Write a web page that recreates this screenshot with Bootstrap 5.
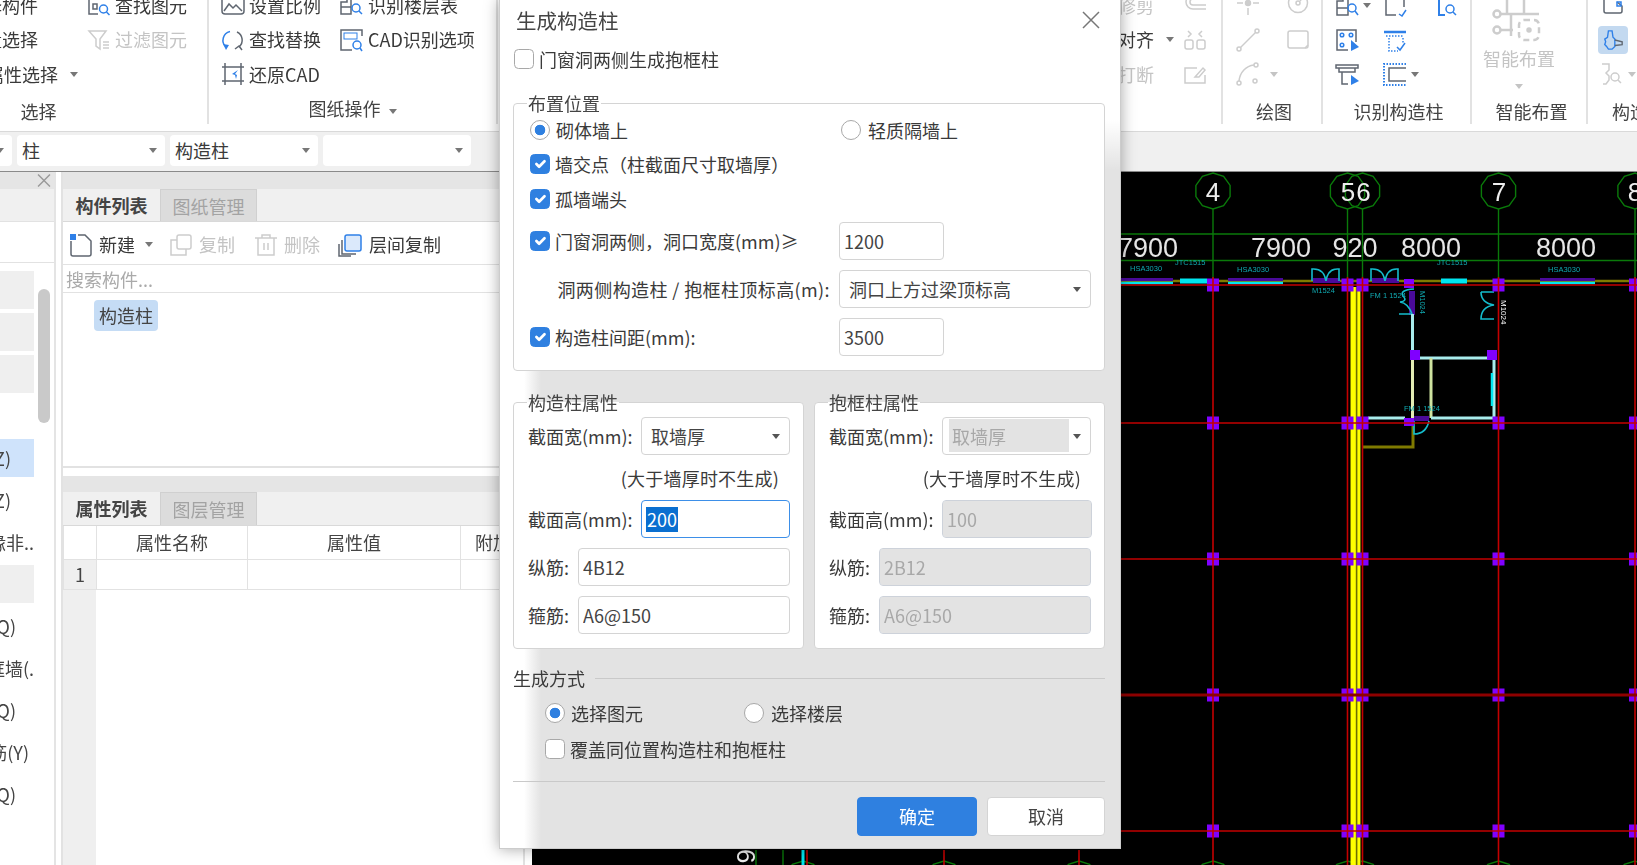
<!DOCTYPE html>
<html lang="zh-CN">
<head>
<meta charset="UTF-8">
<meta name="viewport" content="width=device-width, initial-scale=1.0">
<title>生成构造柱</title>
<link href="https://cdn.jsdelivr.net/npm/bootstrap@5.3.3/dist/css/bootstrap.min.css" rel="stylesheet">
<style>
  html, body { margin: 0; height: 100%; overflow: hidden; background: #fff; }
  body, .form-control, .form-select, .btn { font-family: "Noto Sans CJK SC", "Liberation Sans", sans-serif; font-size: 18px; color: #3a3a3a; }
  .app-root { position: relative; width: 1637px; height: 865px; overflow: hidden; filter: blur(.6px); }

  /* ribbon */
  .ribbon { height: 132px; flex: none; border-bottom: 1px solid #d9d9d9; overflow: hidden; }
  .rb-group { height: 124px; flex: none; display: flex; flex-direction: column; border-right: 2px solid #e2e2e2; }
  .rb-body { margin-top: -12px; height: 103.5px; flex: none; display: flex; }
  .rb-label { margin-top: auto; margin-bottom: 2px; height: 21px; line-height: 21px; text-align: center; white-space: nowrap; color: #444; }
  .rb-col { display: flex; flex-direction: column; flex: none; }
  .rb-item { height: 34.5px; display: flex; align-items: center; gap: 4px; white-space: nowrap; }
  .rb-off { color: #c4c4c4; }
  .ico { width: 24px; height: 24px; fill: none; stroke: #5f6670; stroke-width: 1.5; flex: none; }
  .s-b { stroke: #2f80e8; }
  .s-g { stroke: #cdcdcd; }
  .f-b { fill: #2f80e8; stroke: none; }
  .tri { display: inline-block; width: 0; height: 0; border-left: 4.5px solid transparent; border-right: 4.5px solid transparent; border-top: 5px solid #777; flex: none; }
  .tri-off { border-top-color: #c4c4c4; }
  .ico-hit { width: 30px; height: 28px; background: #c3d9f0; border-radius: 4px; display: flex; align-items: center; justify-content: center; }

  /* combo row */
  .tool-row { height: 39px; flex: none; background: #f0f0f0; gap: 5px; padding-top: 3px; margin-left: -120px; }
  .combo-box { width: 148px; height: 31px; flex: none; background: #fff; border-radius: 4px; display: flex; align-items: center; justify-content: space-between; padding: 0 8px 0 5px; }
  .combo-first { width: 132px; }

  /* panels */
  .work-area { height: 694px; flex: none; border-top: 1px solid #8a8a8a; }
  .side-panel { width: 56px; flex: none; border-right: 2px solid #e4e4e4; overflow: hidden; }
  .pane-head { background: #e5e5e5; flex: none; }
  .side-close { height: 17px; line-height: 15px; text-align: right; padding-right: 0; color: #999; font-size: 20px; }
  .side-tabs { height: 33px; background: #f0f0f0; border-bottom: 1px solid #e2e2e2; }
  .side-blank { height: 41px; border-bottom: 1px solid #e2e2e2; }
  .tree-wrap { padding-top: 8px; }
  .tree-col { width: 34px; flex: none; }
  .tree-row { height: 38px; margin-bottom: 4px; display: flex; align-items: center; justify-content: flex-end; white-space: nowrap; overflow: hidden; color: #444; }
  .tree-grey { background: #efefef; }
  .tree-sel { background: #cfe3fb; }
  .tree-scroll { width: 12px; height: 134px; margin: 18px 0 0 4px; background: #c9c9c9; border-radius: 6px; }

  .mid-panel { width: 464px; margin-left: 5px; flex: none; border-left: 2px solid #e2e2e2; border-right: 2px solid #e2e2e2; }
  .pane-tabs { height: 33px; background: #f0f0f0; flex: none; border-bottom: 1px solid #d9d9d9; }
  .pane-tab { width: 97px; text-align: center; line-height: 32px; font-weight: 700; color: #444; }
  .pane-tab-off { background: #dcdcdc; color: #a3a3a3; font-weight: 400; border: 1px solid #d0d0d0; border-bottom: 0; }
  .pane-bar { height: 42px; flex: none; padding: 3px 0 0 6px; align-items: center; }
  .pane-search { height: 29px; line-height: 29px; flex: none; padding-left: 3px; color: #aaa; border-top: 1px solid #e2e2e2; border-bottom: 1px solid #e2e2e2; }
  .pane-list { height: 175px; flex: none; border-bottom: 2px solid #e2e2e2; }
  .chip-sel { margin: 7px 0 0 31px; width: 64px; height: 31px; line-height: 31px; text-align: center; background: #c5dcf5; border-radius: 4px; color: #444; }
  .pane-gap { height: 8px; flex: none; }
  .prop-table { table-layout: fixed; width: 462px; border-collapse: collapse; flex: none; }
  .prop-table th, .prop-table td { border: 1px solid #e2e2e2; border-top: 0; font-weight: 400; text-align: center; padding: 0; color: #444; overflow: hidden; white-space: nowrap; }
  .prop-table tr:first-child th { height: 33px; }
  .prop-table tbody td { height: 30px; }
  .prop-num { background: #efefef !important; }
  .prop-gutter { width: 33px; flex-grow: 1; background: #efefef; }
  .cad-view { width: 1105px; margin-left: 7px; flex: none; background: #000; }
  .cad-view svg { display: block; }

  /* dialog */
  .dlg-box { position: absolute; left: 499px; top: 0; width: 622px; height: 849px; padding: 0 15px 0 13px; border: 0 solid #ccc; border-width: 0 1px 1px;
    box-shadow: 0 0 14px rgba(0, 0, 0, .35);
    background: linear-gradient(180deg, #fff 120px, rgba(255, 255, 255, 0) 170px), linear-gradient(90deg, #fff 24px, #e3e3e3 41px); }
  .dlg-title { height: 40px; padding-left: 3px; font-size: 20.5px; line-height: 40px; color: #444; }
  .dlg-close { width: 24px; height: 24px; stroke: #777; stroke-width: 1.5; fill: none; margin-right: 2px; }
  .dlg-check { width: 20px; height: 20px; margin: 0 5px 0 0; border: 1px solid #a8a8a8; border-radius: 3px; flex: none; }
  .dlg-check:checked { background-color: #2f80e0; border-color: #2f80e0; }
  .dlg-radio { width: 20px; height: 20px; margin: 0 6px 0 0; border: 1px solid #a8a8a8; flex: none; }
  .dlg-radio:checked { background-color: #fff; border-color: #a8a8a8; background-image: radial-gradient(circle, #2f80e0 0 5px, transparent 5.6px); }
  .dlg-line { height: 20px; margin-top: 9px; padding-left: 1px; display: flex; align-items: center; }
  .dlg-group { position: relative; background: #fff; border: 1px solid #d4d4d4; border-radius: 4px; padding: 14px 13px 14px 14px; }
  .dlg-group-top { padding-left: 16px; }
  .dlg-legend { position: absolute; left: 13px; top: -13px; line-height: 24px; padding: 0 1px; background: linear-gradient(transparent 50%, #fff 50%); color: #444; }
  .opt-row { height: 24px; display: flex; align-items: center; white-space: nowrap; }
  .opt-wide { width: 309px; flex: none; display: flex; align-items: center; }
  .opt-radio { width: 311px; }
  .input-row { display: flex; align-items: center; white-space: nowrap; }
  .form-control.dlg-input, .form-select.dlg-input { height: 38px; min-height: 0; font-size: 18px; padding: 0 4px; border: 1px solid #d4d4d4; border-radius: 4px; box-shadow: none; color: #444; background-color: #fff; }
  .form-select.dlg-input { padding: 0 24px 0 9px;
    background-image: url("data:image/svg+xml,%3Csvg xmlns='http://www.w3.org/2000/svg' width='8' height='5'%3E%3Cpath d='M0 0h8L4 5z' fill='%23555'/%3E%3C/svg%3E");
    background-size: 8px 5px; background-position: right 9px center; background-repeat: no-repeat; }
  .form-control.dlg-input:disabled { background-color: #e3e3e3; border-color: #cdd2da; color: #a8a8a8; }
  .form-select.dlg-input:disabled { color: #a8a8a8; background-color: #fff;
    background-image: url("data:image/svg+xml,%3Csvg xmlns='http://www.w3.org/2000/svg' width='8' height='5'%3E%3Cpath d='M0 0h8L4 5z' fill='%23555'/%3E%3C/svg%3E"), linear-gradient(#e3e3e3, #e3e3e3);
    background-size: 8px 5px, 120px 33px; background-position: right 9px center, 6px 1px; background-repeat: no-repeat; padding-left: 9px; }
  .input-focus { border-color: #3d8fe8 !important; display: flex; align-items: center; }
  .sel-text { background: #0a6fd0; color: #fff; line-height: 25px; padding: 0 1px; }
  .w-side-l { width: 113px; flex: none; }
  .w-side-s { width: 50px; flex: none; }
  .note-line { height: 24px; margin-top: 11px; line-height: 24px; text-align: right; white-space: nowrap; letter-spacing: .2px; }
  .wide-label { letter-spacing: .4px; padding-right: 9px; }
  .btn.dlg-ok { width: 120px; height: 39px; background: #2f80e0; border: 1px solid #2f80e0; color: #fff; padding: 0; border-radius: 4px; }
  .btn.dlg-cancel { width: 118px; height: 39px; background: #fff; border: 1px solid #d4d4d4; color: #444; padding: 0; border-radius: 4px; }
  .dlg-rule { flex-grow: 1; height: 1px; background: #c9c9c9; }
</style>
</head>
<body>
<div class="app-root d-flex flex-column">

  <!-- ribbon -->
  <div class="ribbon d-flex">
    <div class="rb-group" style="width:209px">
      <div class="rb-body">
        <div class="rb-col" style="width:121px;margin-left:-34px">
          <div class="rb-item">选择构件</div>
          <div class="rb-item">批量选择</div>
          <div class="rb-item"><span style="margin-left:2px">按属性选择</span><span class="tri ms-2"></span></div>
        </div>
        <div class="rb-col">
          <div class="rb-item">
            <svg class="ico" viewBox="0 0 24 24"><path d="M20 3H2v18h9"/><path d="M6 11h4v5H6z"/><circle class="s-b" cx="16.500" cy="16" r="4"/><path class="s-b" d="M19.500 19l3 3"/></svg>查找图元</div>
          <div class="rb-item rb-off">
            <svg class="ico s-g" viewBox="0 0 24 24"><path d="M2 3h17l-6 8v10l-4-3v-7z"/><path d="M16 14h6M16 17h6M16 20h6"/></svg>过滤图元</div>
        </div>
      </div>
      <div class="rb-label" style="margin-right:130px">选择</div>
    </div>

    <div class="rb-group" style="width:289px">
      <div class="rb-body" style="padding-left:12px">
        <div class="rb-col" style="width:118px">
          <div class="rb-item">
            <svg class="ico" viewBox="0 0 24 24"><rect x="1" y="2" width="22" height="19" rx="3"/><path d="M3 18l5-7 4 4 3-3 6 6"/></svg>设置比例</div>
          <div class="rb-item">
            <svg class="ico" viewBox="0 0 24 24"><path class="s-b" d="M9 3.500A9 9 0 0 0 5 19"/><path class="f-b" d="M2 16l6 1-3 5z"/><path d="M16 4A9 9 0 0 1 18 19"/><path d="M14 21l4-3 3 4"/></svg>查找替换</div>
          <div class="rb-item">
            <svg class="ico" viewBox="0 0 24 24"><path d="M4 1v22M1 19h22M1 5h22M20 1v22"/><path class="f-b" d="M17 8l-6 4 3 1 1 4 1-4-2-1z"/></svg>还原CAD</div>
        </div>
        <div class="rb-col">
          <div class="rb-item" style="gap:5px">
            <svg class="ico" viewBox="0 0 24 24"><path d="M2 21V9h6V3h4v18H2zM2 14h10"/><circle class="s-b" cx="17" cy="15" r="4"/><path class="s-b" d="M20 18l3 3"/></svg>识别楼层表</div>
          <div class="rb-item" style="gap:5px">
            <svg class="ico" viewBox="0 0 24 24"><path d="M23 8V2H2v20h11"/><rect class="s-b" x="5" y="5" width="13" height="6" stroke-width="1"/><circle class="s-b" cx="18" cy="17" r="4"/><path class="s-b" d="M21 20l2 3"/></svg>CAD识别选项</div>
        </div>
      </div>
      <div class="rb-label" style="margin:auto 0 5px 0">图纸操作<span class="tri ms-2 align-middle"></span></div>
    </div>

    <div class="rb-group" style="width:725px">
      <div class="rb-body" style="padding-left:620px">
        <div class="rb-col" style="width:65px">
          <div class="rb-item rb-off">修剪</div>
          <div class="rb-item">对齐<span class="tri ms-2"></span></div>
          <div class="rb-item rb-off">打断</div>
        </div>
        <div class="rb-col">
          <div class="rb-item"><svg class="ico s-g" viewBox="0 0 24 24"><path d="M23 2H10a7 7 0 0 0 0 14h13M23 6H10a3 3 0 0 0 0 6h13"/></svg></div>
          <div class="rb-item"><svg class="ico s-g" viewBox="0 0 24 24"><rect x="2" y="12" width="8" height="9" rx="2"/><rect x="14" y="12" width="8" height="9" rx="2"/><path d="M5 3l3 3-3 3M19 3l-3 3 3 3"/></svg></div>
          <div class="rb-item"><svg class="ico s-g" viewBox="0 0 24 24"><path d="M22 13v8H2V6h12"/><path d="M12 15l8-9 2 2-6 7z"/></svg></div>
        </div>
      </div>
    </div>

    <div class="rb-group" style="width:100px">
      <div class="rb-body" style="padding-left:13px">
        <div class="rb-col" style="width:50px">
          <div class="rb-item"><svg class="ico s-g" viewBox="0 0 24 24"><circle cx="12" cy="10" r="2.500" fill="#cdcdcd"/><path d="M1 10h6M17 10h6M12 15v7"/></svg></div>
          <div class="rb-item"><svg class="ico s-g" viewBox="0 0 24 24"><circle cx="3" cy="21" r="2"/><circle cx="21" cy="3" r="2"/><path d="M4.500 19.500l15-15"/></svg></div>
          <div class="rb-item"><svg class="ico s-g" viewBox="0 0 24 24"><circle cx="3" cy="21" r="2"/><circle cx="20" cy="3" r="2"/><circle cx="19" cy="19" r="2"/><path d="M3 19C4 10 10 4 18 3"/></svg><span class="tri tri-off" style="margin-left:6px"></span></div>
        </div>
        <div class="rb-col">
          <div class="rb-item"><svg class="ico s-g" viewBox="0 0 24 24"><circle cx="12" cy="10" r="9.500"/><circle cx="12" cy="10" r="2"/><path d="M14 8l4-5"/></svg></div>
          <div class="rb-item"><svg class="ico s-g" viewBox="0 0 24 24"><rect x="2" y="3" width="20" height="17" rx="2"/><path d="M22 17l-3 3" /></svg></div>
        </div>
      </div>
      <div class="rb-label" style="margin-left:4px">绘图</div>
    </div>

    <div class="rb-group" style="width:149px">
      <div class="rb-body" style="padding-left:12px">
        <div class="rb-col" style="width:48px">
          <div class="rb-item gap-1"><svg class="ico" viewBox="0 0 24 24"><path d="M2 22V8h6V2h5v20H2zM2 15h11"/><circle class="s-b" cx="17" cy="15" r="4"/><path class="s-b" d="M20 18l3 4"/></svg><span class="tri"></span></div>
          <div class="rb-item"><svg class="ico" viewBox="0 0 24 24"><path d="M13 22H2V2h19v12"/><circle class="s-b" cx="7" cy="7" r="1.800"/><circle class="s-b" cx="16" cy="7" r="1.800"/><circle class="s-b" cx="7" cy="17" r="1.800"/><path class="f-b" d="M16 12l8 7-8 4z"/></svg></div>
          <div class="rb-item"><svg class="ico" viewBox="0 0 24 24"><path d="M1 3h22v3H1zM4 6v4h16V6M7 10v12h6"/><path class="f-b" d="M16 13l8 6-8 4z"/></svg></div>
        </div>
        <div class="rb-col" style="width:51px">
          <div class="rb-item"><svg class="ico" viewBox="0 0 24 24"><path d="M3 2v20h10M21 2v12"/><path class="s-b" d="M16 21l3 2 4-6"/></svg></div>
          <div class="rb-item"><svg class="ico" viewBox="0 0 24 24"><path class="s-b" stroke-width="2.500" d="M1 4h22"/><path class="s-b" stroke-dasharray="1.500 1.500" d="M3 8h18M6 10v13h9M20 10v5"/><path class="s-b" d="M14 19l3 3 5-7"/></svg></div>
          <div class="rb-item gap-1"><svg class="ico" viewBox="0 0 24 24"><path class="s-b" stroke-width="2" stroke-dasharray="1.500 1.500" d="M23 2H1v21h22"/><path d="M23 6H6v13h17"/></svg><span class="tri"></span></div>
        </div>
        <div class="rb-col">
          <div class="rb-item"><svg class="ico" viewBox="0 0 24 24"><path class="s-b" stroke-width="2" d="M1 4h20M5 7v15h6"/><path class="f-b" d="M2 1h18v6H2z"/><circle class="s-b" cx="16" cy="16" r="4"/><path class="s-b" d="M19 19l3 3"/></svg></div>
        </div>
      </div>
      <div class="rb-label" style="margin-left:4px">识别构造柱</div>
    </div>

    <div class="rb-group" style="width:116px">
      <div class="rb-body flex-column" style="padding-left:10px">
        <svg style="width:58px;height:54px;flex:none;margin-left:7px;fill:none;stroke:#cdcdcd;stroke-width:2.500" viewBox="0 0 58 54">
          <path d="M11 26h39M11 42h13M18 0v26M35 0v26M22 26v22"/>
          <circle cx="8" cy="26" r="3.500"/><circle cx="8" cy="42" r="3.500"/>
          <rect x="30" y="32" width="20" height="20" rx="5" stroke-dasharray="6 4"/>
          <circle cx="40" cy="42" r="1.500" fill="#cdcdcd"/>
        </svg>
        <div class="rb-off text-center" style="width:74px;line-height:24px;margin-top:4px">智能布置</div>
        <div class="text-center" style="width:74px;line-height:14px;margin-top:4px"><span class="tri tri-off"></span></div>
      </div>
      <div class="rb-label" style="margin-left:5px">智能布置</div>
    </div>

    <div class="rb-group border-0" style="width:49px">
      <div class="rb-body" style="padding-left:12px">
        <div class="rb-col">
          <div class="rb-item"><svg class="ico" viewBox="0 0 24 24"><path d="M4 0v18a2 2 0 0 0 2 2h14a2 2 0 0 0 2-2v-5l-5-4"/><path class="s-b" d="M17 9h4v4h-4z"/></svg></div>
          <div class="rb-item" style="margin-left:-2px"><div class="ico-hit"><svg class="ico" style="width:22px" viewBox="0 0 24 24"><path class="s-b" d="M7 2h4l1 7 2 2v8l-3 3H7l-2-3-2-2 1-3-1-3 3-2z"/><path d="M14 12l8 2v3l-8 1"/></svg></div></div>
          <div class="rb-item gap-1"><svg class="ico s-g" viewBox="0 0 24 24"><path d="M2 2h7v6l-3 3 3 3v4l-3 4h-3"/><circle cx="15" cy="15" r="4"/><path d="M18 18l3 3"/></svg><span class="tri tri-off"></span></div>
        </div>
      </div>
      <div class="rb-label text-start" style="margin-left:24px">构造柱</div>
    </div>
  </div>

  <!-- combos -->
  <div class="tool-row d-flex">
    <div class="combo-box combo-first"><span>楼层</span><span class="tri"></span></div>
    <div class="combo-box"><span>柱</span><span class="tri"></span></div>
    <div class="combo-box"><span>构造柱</span><span class="tri"></span></div>
    <div class="combo-box"><span></span><span class="tri"></span></div>
  </div>

  <!-- panels and drawing -->
  <div class="work-area d-flex">
    <div class="side-panel d-flex flex-column">
      <div class="pane-head side-close">×</div>
      <div class="side-tabs"></div>
      <div class="side-blank"></div>
      <div class="tree-wrap d-flex">
        <div class="tree-col">
          <div class="tree-row tree-grey"></div>
          <div class="tree-row tree-grey"></div>
          <div class="tree-row tree-grey"></div>
          <div class="tree-row"></div>
          <div class="tree-row tree-sel" style="padding-right:23px">(GZ)</div>
          <div class="tree-row" style="padding-right:23px">(GZ)</div>
          <div class="tree-row">缘非..</div>
          <div class="tree-row tree-grey"></div>
          <div class="tree-row" style="padding-right:18px">(Q)</div>
          <div class="tree-row">框墙(.</div>
          <div class="tree-row" style="padding-right:18px">(Q)</div>
          <div class="tree-row" style="padding-right:5px">筋(Y)</div>
          <div class="tree-row" style="padding-right:18px">(Q)</div>
        </div>
        <div class="tree-scroll"></div>
      </div>
    </div>

    <div class="mid-panel d-flex flex-column">
      <div class="pane-head" style="height:17px"></div>
      <div class="pane-tabs d-flex">
        <div class="pane-tab">构件列表</div>
        <div class="pane-tab pane-tab-off">图纸管理</div>
      </div>
      <div class="pane-bar d-flex">
        <svg class="ico" viewBox="0 0 24 24"><path d="M2 8v13a2 2 0 0 0 2 2h16a2 2 0 0 0 2-2V8l-6-6H9"/><path class="f-b" d="M1 1h6v6H1z"/></svg>
        <span style="margin-left:6px">新建</span><span class="tri" style="margin-left:10px"></span>
        <svg class="ico s-g" style="margin-left:16px" viewBox="0 0 24 24"><rect x="8" y="2" width="14" height="14" rx="2"/><path d="M8 7H2v15h15v-6"/></svg>
        <span class="rb-off" style="margin-left:6px">复制</span>
        <svg class="ico s-g" style="margin-left:19px" viewBox="0 0 24 24"><path d="M1 5h22M8 5V2h8v3M4 5v17h16V5M10 10v7M14 10v7"/></svg>
        <span class="rb-off" style="margin-left:6px">删除</span>
        <svg class="ico" style="margin-left:18px" viewBox="0 0 24 24"><rect class="s-b" x="7" y="2" width="16" height="16" rx="2" fill="#dbe9fb"/><path d="M4 7v14h14M1 11v12h12"/></svg>
        <span style="margin-left:7px">层间复制</span>
      </div>
      <div class="pane-search">搜索构件...</div>
      <div class="pane-list"><div class="chip-sel">构造柱</div></div>
      <div class="pane-gap"></div>
      <div class="pane-head" style="height:16px"></div>
      <div class="pane-tabs d-flex" style="height:34px">
        <div class="pane-tab">属性列表</div>
        <div class="pane-tab pane-tab-off">图层管理</div>
      </div>
      <table class="prop-table">
        <colgroup><col style="width:33px"><col style="width:151px"><col style="width:213px"><col style="width:65px"></colgroup>
        <thead><tr><th></th><th>属性名称</th><th>属性值</th><th>附加</th></tr></thead>
        <tbody><tr><td class="prop-num">1</td><td></td><td></td><td></td></tr></tbody>
      </table>
      <div class="prop-gutter"></div>
    </div>

    <div class="cad-view">
      <svg id="cadPlan" width="1105" height="694" viewBox="532 171 1105 694" font-family="Liberation Sans, sans-serif"></svg>
    </div>
  </div>

  <!-- dialog -->
  <div class="dlg-box">
    <div class="dlg-title d-flex justify-content-between align-items-center">
      <span>生成构造柱</span>
      <svg class="dlg-close" viewBox="0 0 24 24"><path d="M4 4l16 16M20 4L4 20"/></svg>
    </div>
    <div class="dlg-line">
      <input class="form-check-input dlg-check" type="checkbox"><span>门窗洞两侧生成抱框柱</span>
    </div>

    <div class="dlg-group dlg-group-top" style="margin-top:34px;height:268px">
      <div class="dlg-legend">布置位置</div>
      <div class="opt-row">
        <div class="opt-wide opt-radio"><input class="form-check-input dlg-radio" type="radio" name="pos" checked><span>砌体墙上</span></div>
        <input class="form-check-input dlg-radio" type="radio" name="pos" style="margin-right:7px"><span>轻质隔墙上</span>
      </div>
      <div class="opt-row" style="margin-top:10px"><input class="form-check-input dlg-check" type="checkbox" checked><span>墙交点（柱截面尺寸取墙厚）</span></div>
      <div class="opt-row" style="margin-top:11px"><input class="form-check-input dlg-check" type="checkbox" checked><span>孤墙端头</span></div>
      <div class="input-row" style="margin-top:11px">
        <div class="opt-wide"><input class="form-check-input dlg-check" type="checkbox" checked><span>门窗洞两侧，洞口宽度(mm)≥</span></div>
        <input class="form-control dlg-input" style="width:105px" value="1200">
      </div>
      <div class="input-row" style="margin-top:10px">
        <div class="opt-wide justify-content-end wide-label">洞两侧构造柱 / 抱框柱顶标高(m):</div>
        <select class="form-select dlg-input" style="width:253px"><option>洞口上方过梁顶标高</option></select>
      </div>
      <div class="input-row" style="margin-top:10px">
        <div class="opt-wide"><input class="form-check-input dlg-check" type="checkbox" checked><span>构造柱间距(mm):</span></div>
        <input class="form-control dlg-input" style="width:105px" value="3500">
      </div>
    </div>

    <div class="d-flex" style="margin-top:31px;gap:10px">
      <div class="dlg-group" style="width:291px;height:247px">
        <div class="dlg-legend">构造柱属性</div>
        <div class="input-row"><div class="w-side-l">截面宽(mm):</div>
          <select class="form-select dlg-input" style="width:149px"><option>取墙厚</option></select></div>
        <div class="note-line" style="padding-right:11px">(大于墙厚时不生成)</div>
        <div class="input-row" style="margin-top:10px"><div class="w-side-l">截面高(mm):</div>
          <div class="form-control dlg-input input-focus" style="width:149px"><span class="sel-text">200</span></div></div>
        <div class="input-row" style="margin-top:10px"><div class="w-side-s">纵筋:</div>
          <input class="form-control dlg-input" style="width:212px" value="4B12"></div>
        <div class="input-row" style="margin-top:10px"><div class="w-side-s">箍筋:</div>
          <input class="form-control dlg-input" style="width:212px" value="A6@150"></div>
      </div>
      <div class="dlg-group" style="width:291px;height:247px">
        <div class="dlg-legend">抱框柱属性</div>
        <div class="input-row"><div class="w-side-l">截面宽(mm):</div>
          <select class="form-select dlg-input" style="width:150px" disabled><option>取墙厚</option></select></div>
        <div class="note-line" style="padding-right:10px">(大于墙厚时不生成)</div>
        <div class="input-row" style="margin-top:10px"><div class="w-side-l">截面高(mm):</div>
          <input class="form-control dlg-input" style="width:150px" value="100" disabled></div>
        <div class="input-row" style="margin-top:10px"><div class="w-side-s">纵筋:</div>
          <input class="form-control dlg-input" style="width:213px" value="2B12" disabled></div>
        <div class="input-row" style="margin-top:10px"><div class="w-side-s">箍筋:</div>
          <input class="form-control dlg-input" style="width:213px" value="A6@150" disabled></div>
      </div>
    </div>

    <div class="d-flex align-items-center" style="margin-top:18px;height:22px;gap:10px"><span>生成方式</span><div class="dlg-rule"></div></div>
    <div class="opt-row" style="margin-top:12px;padding-left:32px">
      <div class="d-flex align-items-center" style="width:199px"><input class="form-check-input dlg-radio" type="radio" name="mode" checked><span>选择图元</span></div>
      <input class="form-check-input dlg-radio" type="radio" name="mode" style="margin-right:7px"><span>选择楼层</span>
    </div>
    <div class="opt-row" style="margin-top:12px;padding-left:32px"><input class="form-check-input dlg-check" type="checkbox"><span>覆盖同位置构造柱和抱框柱</span></div>
    <div class="dlg-rule" style="margin-top:20px"></div>
    <div class="d-flex justify-content-end" style="margin-top:15px;gap:10px">
      <button type="button" class="btn dlg-ok">确定</button>
      <button type="button" class="btn dlg-cancel">取消</button>
    </div>
  </div>
</div>

<script src="https://cdn.jsdelivr.net/npm/bootstrap@5.3.3/dist/js/bootstrap.bundle.min.js"></script>
<script>
// axis grid of the plan, page coordinates are used directly in the viewBox
const plan = document.getElementById('cadPlan');
function add(tag, attrs, txt) {
  const el = document.createElementNS('http://www.w3.org/2000/svg', tag);
  for (const k in attrs) el.setAttribute(k, attrs[k]);
  if (txt) el.textContent = txt;
  plan.appendChild(el);
  return el;
}
function line(x1, y1, x2, y2, stroke, w) {
  add('line', { x1, y1, x2, y2, stroke, 'stroke-width': w });
}
function bubble(cx, cy) {
  const pts = [];
  for (let i = 0; i < 10; i++) {
    const a = -Math.PI / 2 + i * Math.PI / 5;
    pts.push((cx + 18 * Math.cos(a)).toFixed(1) + ',' + (cy + 18 * Math.sin(a)).toFixed(1));
  }
  add('polygon', { points: pts.join(' '), fill: 'none', stroke: '#0a7a0a', 'stroke-width': 1.4 });
}
const GREEN = '#0a7a0a', RED = '#c40000', CYAN = '#00e5f0', TEAL = '#14bccc', OLIVE = '#7f7a00', PURP = '#8000ff', DARKP = '#4a0a9a';
const cols = [1213, 1347.5, 1362.5, 1498.5, 1635];
const rows = [284, 422, 558, 694, 830];

// green axis lines
line(532, 233, 1637, 233, GREEN, 1.4);
line(532, 259.500, 1637, 259.500, GREEN, 1.4);
cols.forEach(x => { bubble(x, 190); line(x, 208, x, 284, GREEN, 1.4); bubble(x, 878); });
[803, 944, 1079].forEach(x => bubble(x, 878));
line(756, 849, 756, 865, GREEN, 1.4);
line(783, 849, 783, 865, GREEN, 1.4);
line(803, 849, 803, 865, CYAN, 3);

// yellow double wall
add('rect', { x: 1350.5, y: 286, width: 10, height: 579, fill: '#ffff00' });
add('rect', { x: 1355.800, y: 286, width: 1.600, height: 579, fill: '#6f6f00' });
add('rect', { x: 1360, y: 286, width: 1, height: 579, fill: '#6f6f00' });

// top wall with windows and doors
line(1121, 280, 1637, 280, OLIVE, 2.5);
[[1121, 1173], [1228, 1283], [1540, 1595]].forEach(w => {
  line(w[0], 278.500, w[1], 278.500, DARKP, 3);
  line(w[0], 282, w[1], 282, CYAN, 2.5);
});
[[1180, 1207], [1441, 1467]].forEach(w => add('rect', { x: w[0], y: 277.500, width: w[1] - w[0], height: 5, fill: CYAN }));
[1312, 1371].forEach(x => {
  add('rect', { x: x + 1, y: 277, width: 27, height: 5, fill: DARKP });
  add('path', { d: `M${x} 280V268Q${x + 12} 267 ${x + 14} 280Q${x + 16} 267 ${x + 27} 268V280`, fill: 'none', stroke: TEAL, 'stroke-width': 1.6 });
});

// room
add('rect', { x: 1409, y: 290, width: 6, height: 24, fill: DARKP });
add('path', { d: 'M1414 288Q1399 289 1403 295Q1408 300 1400 301Q1408 302 1412 313H1399', fill: 'none', stroke: TEAL, 'stroke-width': 1.6 });
add('path', { d: 'M1481 291H1494M1481 291Q1481 302 1494 304Q1481 306 1481 318H1494', fill: 'none', stroke: TEAL, 'stroke-width': 1.6 });
line(1412.500, 313, 1412.500, 357, '#a8ecec', 3);
line(1412.500, 357, 1412.500, 417, '#e2ecb4', 3);
line(1419, 357, 1494, 357, '#a8ecec', 3);
line(1494, 357, 1494, 417, '#a8ecec', 3);
line(1492, 372, 1492, 405, CYAN, 2.5);
line(1431, 357, 1431, 417, '#cfe3a0', 3);
line(1431, 417, 1494, 417, '#a8ecec', 3);
line(1368, 417, 1405, 417, '#a8ecec', 3);
add('path', { d: 'M1362 446H1413V424', fill: 'none', stroke: OLIVE, 'stroke-width': 3 });
add('rect', { x: 1414, y: 415, width: 15, height: 5, fill: DARKP });
add('path', { d: 'M1414 420V433Q1426 433 1429 420', fill: 'none', stroke: TEAL, 'stroke-width': 1.6 });

// column squares under the red axes
rows.forEach(y => cols.forEach(x => add('rect', { x: x - 6, y: y - 6.500, width: 12, height: 13, fill: PURP })));
[[1409, 282.500, 10, 9], [1415, 354, 10, 10], [1492, 354, 10, 10], [1409, 421, 10, 8]].forEach(s =>
  add('rect', { x: s[0] - s[2] / 2, y: s[1] - s[3] / 2, width: s[2], height: s[3], fill: PURP }));

// red axes
cols.forEach(x => line(x, 276, x, 865, RED, 1.6));
line(944, 849, 944, 865, RED, 1.6);
line(1079, 849, 1079, 865, RED, 1.6);
line(807, 849, 807, 865, RED, 1.6);
rows.forEach((y, i) => line(532, y, 1637, y, i === 3 ? '#8e0000' : RED, i === 3 ? 3 : 1.6));

// axis numbers and dimensions
[['4', 1213], ['5', 1348], ['6', 1363.500], ['7', 1499], ['8', 1635]].forEach(t =>
  add('text', { x: t[1], y: 200, fill: '#eee', 'font-size': 26, 'text-anchor': 'middle' }, t[0]));
[['7900', 1148], ['7900', 1281], ['920', 1355], ['8000', 1431], ['8000', 1566]].forEach(t =>
  add('text', { x: t[1], y: 256, fill: '#e6e6e6', 'font-size': 27, 'text-anchor': 'middle' }, t[0]));
[['HSA3030', 1130, 270], ['JTC1515', 1175, 264], ['HSA3030', 1237, 271], ['M1524', 1312, 292], ['FM 1 1524', 1370, 297],
 ['JTC1515', 1437, 264], ['HSA3030', 1548, 271], ['FM 1 1524', 1404, 410]].forEach(t =>
  add('text', { x: t[1], y: t[2], fill: '#10a8b0', 'font-size': 7.5 }, t[0]));
add('text', { x: 0, y: 0, fill: '#10a8b0', 'font-size': 7.5, transform: 'translate(1420 290) rotate(90)' }, 'M1024');
add('text', { x: 0, y: 0, fill: '#fff', 'font-size': 8, transform: 'translate(1501 299) rotate(90)' }, 'M1024');
add('text', { x: 0, y: 0, fill: '#eee', 'font-size': 26, transform: 'translate(737 848) rotate(90)' }, '6');
</script>
</body>
</html>
